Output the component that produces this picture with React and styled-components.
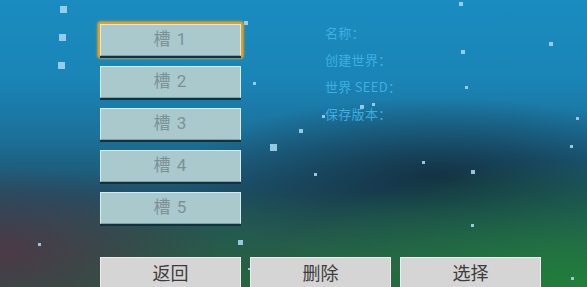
import styled, { createGlobalStyle } from "styled-components";

const GlobalStyle = createGlobalStyle`
  html, body {
    margin: 0;
    padding: 0;
    background: #1a4a60;
  }
  body {
    font-family: Roboto, "Noto Sans CJK SC", sans-serif;
  }
`;

const slots = ["槽 1", "槽 2", "槽 3", "槽 4", "槽 5"];
const infoLabels = ["名称：", "创建世界：", "世界 SEED：", "保存版本："];
const actions = ["返回", "删除", "选择"];

// decorative snow particles: [x, y, size]
const particles = [
  [60, 6, 7], [59, 34, 7], [58, 62, 7], [244, 21, 4], [253, 82, 3],
  [299, 129, 4], [270, 144, 7], [314, 173, 3], [238, 240, 5], [38, 243, 3],
  [322, 115, 3], [360, 105, 4], [372, 103, 3], [459, 2, 4], [461, 50, 4],
  [465, 86, 3], [422, 161, 3], [471, 170, 4], [471, 224, 3], [549, 42, 4],
  [576, 117, 3], [570, 145, 3], [571, 277, 3], [248, 268, 2],
];

const App = () => {
  return (
    <>
      <GlobalStyle />
      <Screen>
        {particles.map(([x, y, s], i) => (
          <Particle key={i} style={{ left: x, top: y, width: s, height: s }} />
        ))}
        <Main>
          <SlotList>
            {slots.map((label, i) => (
              <SlotFrame key={label} $focused={i === 0}>
                <SlotButton>{label}</SlotButton>
              </SlotFrame>
            ))}
          </SlotList>
          <InfoList>
            {infoLabels.map((label) => (
              <InfoLine key={label}>{label}</InfoLine>
            ))}
          </InfoList>
        </Main>
        <ActionBar>
          {actions.map((label) => (
            <ActionButton key={label}>{label}</ActionButton>
          ))}
        </ActionBar>
      </Screen>
    </>
  );
};

const Screen = styled.div`
  position: relative;
  width: 587px;
  height: 287px;
  overflow: hidden;
  display: flex;
  flex-direction: column;
  background:
    radial-gradient(ellipse 38% 30% at 0% 88%, rgba(78, 56, 70, 0.95), rgba(78, 56, 70, 0) 100%),
    radial-gradient(ellipse 55% 45% at 100% 100%, rgba(32, 130, 58, 0.95), rgba(32, 130, 58, 0) 100%),
    radial-gradient(ellipse 60% 35% at 45% 100%, rgba(38, 104, 62, 0.9), rgba(38, 104, 62, 0) 100%),
    radial-gradient(ellipse 45% 28% at 75% 62%, rgba(18, 42, 58, 0.85), rgba(18, 42, 58, 0) 100%),
    linear-gradient(180deg, #1a8cc0 0%, #1a84b6 28%, #1c7099 48%, #1e5169 68%, #2a4c48 100%);
`;

const Particle = styled.div`
  position: absolute;
  background: #a4d4ec;
  opacity: 0.9;
`;

const Main = styled.div`
  display: flex;
  padding: 22px 0 0 98px;
`;

const SlotList = styled.div`
  display: flex;
  flex-direction: column;
  gap: 6px;
  width: 145px;
`;

const SlotFrame = styled.div`
  padding: 2px;
  border-radius: 3px;
  background: ${({ $focused }) => ($focused ? "#eb9c1c" : "transparent")};
  box-shadow: ${({ $focused }) =>
    $focused ? "0 0 2px 1px rgba(240, 170, 40, 0.7)" : "none"};
`;

const SlotButton = styled.div`
  box-sizing: border-box;
  height: 32px;
  display: flex;
  align-items: center;
  justify-content: center;
  padding-bottom: 5px;
  background: #a9c9cd;
  border: 1px solid #d4eef0;
  border-bottom-color: #7fa0a6;
  box-shadow: 0 2px 0 #123240;
  color: #7c9296;
  font-size: 17px;
  letter-spacing: 1px;
`;

const InfoList = styled.div`
  display: flex;
  flex-direction: column;
  gap: 8px;
  margin-left: 82px;
  padding-top: 1px;
`;

const InfoLine = styled.div`
  font-family: "Noto Sans CJK SC", sans-serif;
  font-size: 13px;
  line-height: 19px;
  letter-spacing: 0.3px;
  color: #44b8ea;
  opacity: 0.85;
`;

const ActionBar = styled.div`
  display: flex;
  gap: 9px;
  padding-left: 100px;
  margin-top: 31px;
`;

const ActionButton = styled.div`
  box-sizing: border-box;
  width: 141px;
  height: 34px;
  display: flex;
  align-items: flex-start;
  justify-content: center;
  padding-top: 2px;
  background: #d5d5d5;
  border: 1px solid #ececec;
  border-bottom: none;
  color: #3c3c3c;
  font-family: "Noto Sans CJK SC", sans-serif;
  font-size: 18px;
  line-height: 24px;
`;

export default App;
